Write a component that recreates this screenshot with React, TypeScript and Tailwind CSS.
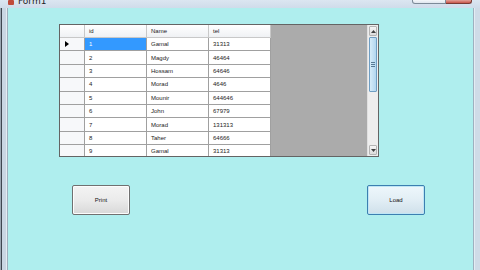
import React from "react";

const rows: [string, string, string][] = [
  ["1", "Gamal", "31313"],
  ["2", "Magdy", "46464"],
  ["3", "Hossam", "64646"],
  ["4", "Morad", "4646"],
  ["5", "Mounir", "644646"],
  ["6", "John", "67979"],
  ["7", "Morad", "131313"],
  ["8", "Taher", "64666"],
  ["9", "Gamal", "31313"],
];

function Grid() {
  return (
    <div className="w-[320px] h-[133px] border border-[#646464] flex overflow-hidden bg-[#ababab] shrink-0">
      <div className="w-[211px] flex flex-col bg-white shrink-0">
        <div className="flex h-[13px] shrink-0 bg-gradient-to-b from-[#ffffff] to-[#eef0f3]">
          <div className="w-[25px] border-r border-b border-[#c8c8c8]" />
          {["id", "Name", "tel"].map((h) => (
            <div
              key={h}
              className="w-[62px] border-r border-b border-[#c8c8c8] pl-[4px] flex items-center text-[6px] text-[#1a1a1a] leading-none"
            >
              {h}
            </div>
          ))}
        </div>
        {rows.map((r, i) => (
          <div key={i} className="flex h-[13.4px] shrink-0">
            <div className="w-[25px] border-r border-b border-[#a0a0a0] bg-[#f7f8fa] flex items-center pl-[5px]">
              {i === 0 && (
                <svg width="4" height="6" viewBox="0 0 4 6">
                  <path d="M0 0 L4 3 L0 6 Z" fill="#000" />
                </svg>
              )}
            </div>
            {r.map((c, j) => (
              <div
                key={j}
                className={
                  "w-[62px] border-r border-b border-[#a0a0a0] pl-[4px] flex items-center text-[6px] leading-none " +
                  (i === 0 && j === 0 ? "bg-[#3399ff] text-white" : "text-[#1a1a1a]")
                }
              >
                {c}
              </div>
            ))}
          </div>
        ))}
      </div>
      <div className="flex-1" />
      <div className="w-[11px] flex flex-col bg-[#eeeeee] border-l border-[#e0e0e0] shrink-0">
        <div className="h-[10px] mx-[1px] mt-[1px] border border-[#b4b4b4] rounded-[1px] bg-gradient-to-b from-[#f6f6f6] to-[#dcdcdc] flex items-center justify-center">
          <svg width="5" height="3" viewBox="0 0 5 3">
            <path d="M0 3 L2.5 0 L5 3 Z" fill="#404040" />
          </svg>
        </div>
        <div className="h-[55px] mx-[1px] mt-[1px] border border-[#6f9ec3] rounded-[1px] bg-gradient-to-r from-[#d6ebf8] to-[#b3d6ef] flex flex-col items-center justify-center gap-[1px]">
          <div className="w-[4px] h-[1px] bg-[#5a7a94]" />
          <div className="w-[4px] h-[1px] bg-[#5a7a94]" />
          <div className="w-[4px] h-[1px] bg-[#5a7a94]" />
        </div>
        <div className="flex-1" />
        <div className="h-[10px] mx-[1px] mb-[1px] border border-[#b4b4b4] rounded-[1px] bg-gradient-to-b from-[#f6f6f6] to-[#dcdcdc] flex items-center justify-center">
          <svg width="5" height="3" viewBox="0 0 5 3">
            <path d="M0 0 L2.5 3 L5 0 Z" fill="#404040" />
          </svg>
        </div>
      </div>
    </div>
  );
}

function Btn({ label, focused }: { label: string; focused?: boolean }) {
  return (
    <div
      className={
        "w-[58px] h-[30px] rounded-[2px] border flex items-center justify-center text-[6px] text-[#111] " +
        (focused
          ? "border-[#3c7fb1] bg-gradient-to-b from-[#eef7fc] via-[#e2eef5] to-[#cfe0ea] shadow-[inset_0_0_0_1px_#bfe6f5]"
          : "border-[#707070] bg-gradient-to-b from-[#f3f3f3] via-[#ebebeb] to-[#d8d8d8] shadow-[inset_0_0_0_1px_#fcfcfc]")
      }
    >
      {label}
    </div>
  );
}

export default function App() {
  return (
    <div
      className="w-[480px] h-[270px] overflow-hidden flex flex-col bg-[#cfdbe7]"
      style={{ fontFamily: '"Liberation Sans", Arial, sans-serif' }}
    >
      <div className="h-[8px] shrink-0 flex items-end bg-gradient-to-b from-[#dbe6f1] to-[#cfdcea] relative overflow-hidden">
        <div className="flex items-end pl-[8px] gap-[4px] h-[8px]">
          <div className="w-[6px] h-[5px] mb-[3px] bg-[#c04a3a] rounded-[1px]" />
          <div className="text-[9px] leading-none text-[#1e1e1e] mb-[2px]" style={{ fontFamily: '"DejaVu Sans", sans-serif' }}>
            Form1
          </div>
        </div>
        <div className="flex-1" />
        <div className="flex self-start mr-[8px]">
          <div className="w-[34px] h-[4px] border border-t-0 border-[#7c8a98] rounded-bl-[3px] bg-gradient-to-b from-[#f4f7fa] to-[#dfe6ee]" />
          <div className="w-[26px] h-[4px] border border-t-0 border-l-0 border-[#7a3a34] rounded-br-[3px] bg-gradient-to-b from-[#e2a098] to-[#c8544a]" />
        </div>
      </div>
      <div className="flex-1 flex">
        <div className="w-[7px] shrink-0 flex">
          <div className="w-[1px] bg-[#9aa6b2]" />
          <div className="w-[1px] bg-[#3e4650]" />
          <div className="flex-1 bg-[#c9d6e3]" />
          <div className="w-[1px] bg-[#e4ecf3]" />
        </div>
        <div className="flex-1 bg-[#afeeee] border-l border-[#9fb0bf] flex flex-col">
          <div className="pl-[51px] pt-[16px]">
            <Grid />
          </div>
          <div className="ml-[64px] w-[353px] mt-[28px] flex justify-between">
            <Btn label="Print" />
            <Btn label="Load" focused />
          </div>
        </div>
        <div className="w-[7px] shrink-0 flex border-l border-[#9fb0bf]">
          <div className="w-[1px] bg-[#e4ecf3]" />
          <div className="flex-1 bg-[#cfdbe7]" />
        </div>
      </div>
    </div>
  );
}
